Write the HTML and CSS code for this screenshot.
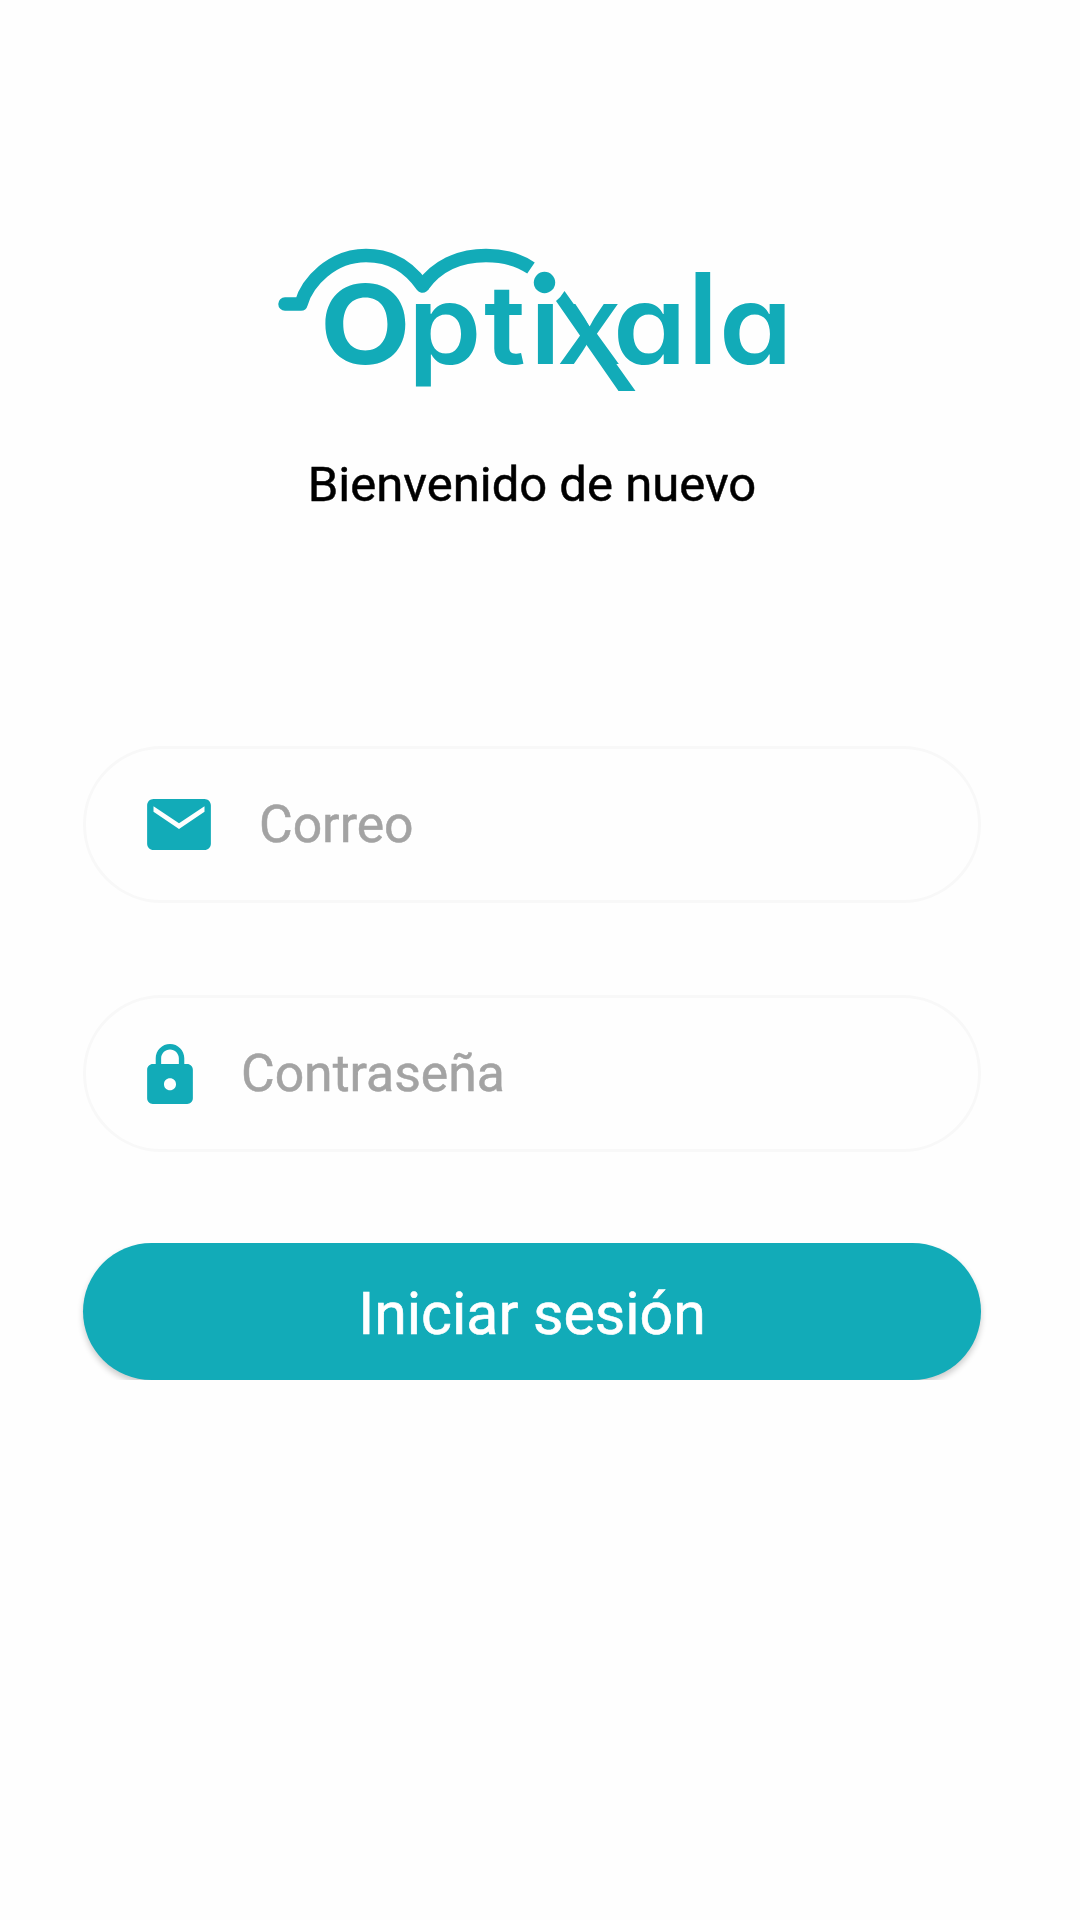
FILE: index.html
```html
<!DOCTYPE html>
<html lang="es">
<head>
    <meta charset="UTF-8">
    <meta name="viewport" content="width=device-width, initial-scale=1.0">
    <title>Optixala</title>
    <link rel="stylesheet" href="styles.css">
</head>
<body>

<div class="login-container">
    <svg class="logo" viewBox="270 240 530 160" role="img" aria-label="Optixala">
        <text class="logo-text" transform="scale(1.07 1)" y="364.500" x="299 381.400 452.300 495.300 520 572.800 641 672"><tspan class="bold">O</tspan>pti<tspan class="thin">x</tspan>a<tspan class="tall">l</tspan>a</text>
        <circle class="logo-gap" cx="544.500" cy="282.500" r="18"/>
        <circle cx="544.500" cy="282.500" r="10.700"/>
        <!-- glasses -->
        <path class="logo-line round" d="M285 304H301C307 282 332 255.500 366 255.500C392 255.500 409 267 422.500 286"/>
        <path class="logo-line" d="M422.500 286C436 267 458 255.500 486 255.500C504 255.500 519 260 531 268"/>
        <!-- long leg of the x -->
        <path d="M564.500 291L635.500 391H618.500L556 301Q561 297 564.500 291Z"/>
    </svg>
    <h1>Bienvenido de nuevo</h1>
    <form id="loginForm">
        <div class="form-group">
            <svg class="icon-mail" viewBox="2 4 20 16">
                <path d="M20 4H4c-1.100 0-2 .9-2 2v12c0 1.100.9 2 2 2h16c1.100 0 2-.9 2-2V6c0-1.100-.9-2-2-2zm0 4-8 5.400-8-5.400V6.300l8 5.300 8-5.300z"/>
            </svg>
            <input type="email" id="email" name="email" placeholder="Correo">
        </div>
        <div class="form-group">
            <svg class="icon-lock" viewBox="4 1 16 21">
                <path d="M18 8h-1V6c0-2.760-2.240-5-5-5S7 3.240 7 6v2H6c-1.100 0-2 .9-2 2v10c0 1.100.9 2 2 2h12c1.100 0 2-.9 2-2V10c0-1.100-.9-2-2-2zm-6 9.200c-1.200 0-2.100-.9-2.100-2.100s.9-2.100 2.100-2.100 2.100.9 2.100 2.100-.9 2.100-2.100 2.100zM15.100 8H8.900V6c0-1.710 1.390-3.100 3.100-3.100s3.100 1.390 3.100 3.100v2z"/>
            </svg>
            <input type="password" id="password" name="password" placeholder="Contraseña">
        </div>
        <div class="button-wrap">
            <button type="submit">Iniciar sesión</button>
        </div>
    </form>
</div>

</body>
</html>
```
FILE: styles.css
```css
body {
    font-family: Roboto, "Liberation Sans", sans-serif;
    background-color: #fefefe;
    color: #000;
    margin: 0;
}
.login-container {
    display: flex;
    flex-direction: column;
    align-items: center;
    box-sizing: border-box;
    min-height: 1920px;
    padding: 240px 99px 0 83px;
}
.logo {
    width: 530px;
    height: 160px;
    margin-left: 6px;
    fill: #12abb8;
}
.logo-line {
    fill: none;
    stroke: #12abb8;
    stroke-width: 13.5;
    stroke-linejoin: round;
}
.logo-line.round {
    stroke-linecap: round;
}
.logo-gap {
    fill: #fefefe;
}
.logo-text {
    font-family: Inter, sans-serif;
    font-size: 110px;
    font-weight: 600;
    font-feature-settings: "cv11";
}
.logo-text .bold {
    font-weight: 700;
}
.logo-text .thin {
    font-weight: 500;
}
.logo-text .tall {
    font-size: 127px;
    font-weight: 500;
}
h1 {
    font-size: 49px;
    font-weight: 400;
    line-height: 60px;
    margin: 55px 0 231px;
    white-space: nowrap;
    -webkit-text-stroke: 0.5px #000;
}
form {
    width: 100%;
}
.form-group {
    display: flex;
    align-items: center;
    gap: 48px;
    box-sizing: border-box;
    height: 157px;
    margin-bottom: 92px;
    padding: 0 61px;
    border: 3px solid #f8f8f8;
    border-radius: 79px;
}
.icon-mail, .icon-lock {
    flex: none;
    fill: #12abb8;
}
.icon-mail {
    width: 64px;
    height: 51px;
}
.icon-lock {
    width: 46px;
    height: 60px;
}
input {
    flex: 1;
    min-width: 0;
    padding: 0;
    border: none;
    outline: none;
    background: none;
    font-family: inherit;
    font-size: 51.7px;
}
input::placeholder {
    color: #a3a3a3;
    -webkit-text-stroke: 0.5px #a3a3a3;
}
.button-wrap {
    height: 137px;
    margin: -1px -10px 0;
    padding: 0 10px;
    overflow: hidden;
}
button {
    width: 100%;
    height: 137px;
    padding: 3px 0 0;
    font-family: inherit;
    font-size: 59px;
    -webkit-text-stroke: 0.6px #fff;
    background-color: #12abb8;
    color: #fff;
    border: none;
    border-radius: 69px;
    box-shadow: 0 4px 6px rgba(0, 0, 0, 0.2);
    cursor: pointer;
}
```
